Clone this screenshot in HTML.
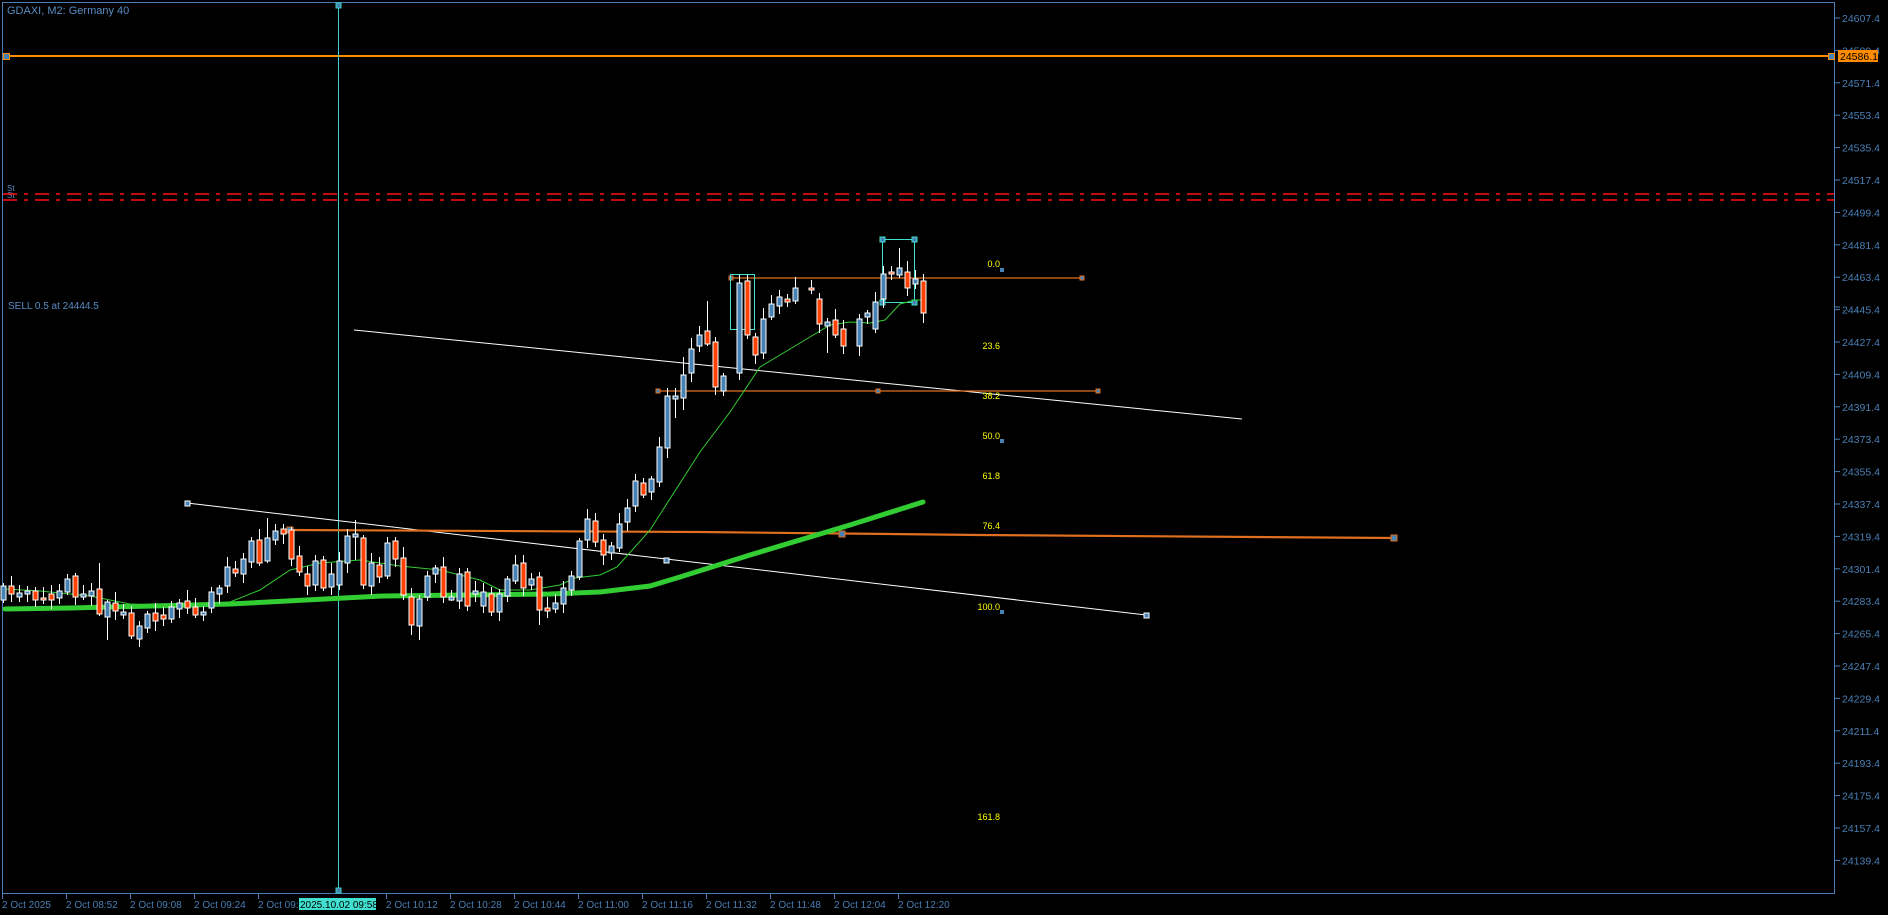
<!DOCTYPE html>
<html><head><meta charset="utf-8"><style>
html,body{margin:0;padding:0;background:#000;width:1888px;height:915px;overflow:hidden}
svg{display:block}
text{font-family:"Liberation Sans",sans-serif}
</style></head><body>
<svg id="s" width="1888" height="915" viewBox="0 0 1888 915" xmlns="http://www.w3.org/2000/svg">
<rect width="1888" height="915" fill="#000"/>
<rect x="2.5" y="2.5" width="1832" height="891" fill="none" stroke="#4a7fb5" stroke-width="1"/>
<text x="7" y="14" font-size="11" fill="#5a8cc4">GDAXI, M2:  Germany 40</text>
<text x="8" y="309" font-size="10" fill="#5a8cc4">SELL 0.5 at 24444.5</text>
<text x="7" y="191" font-size="8" fill="#5a8cc4">St</text>
<text x="7" y="198" font-size="8" fill="#5a8cc4">St</text>
<line x1="3" y1="194" x2="1834" y2="194" stroke="#ff1010" stroke-width="1.4" stroke-dasharray="14,7,4,7"/>
<line x1="3" y1="200" x2="1834" y2="200" stroke="#ff1010" stroke-width="1.4" stroke-dasharray="14,7,4,7"/>
<line x1="3" y1="56" x2="1834" y2="56" stroke="#ff8c00" stroke-width="2"/>
<rect x="3.5" y="53.5" width="6" height="6" fill="#4682b4" stroke="#ff8c00"/>
<rect x="1828.5" y="53.5" width="6" height="6" fill="#4682b4" stroke="#ff8c00"/>
<line x1="338.5" y1="5" x2="338.5" y2="893" stroke="#40d0c8" stroke-width="1"/>
<rect x="336" y="3" width="5" height="5" fill="#4682b4" stroke="#40d0c8"/>
<rect x="336" y="888" width="5" height="5" fill="#4682b4" stroke="#40d0c8"/>
<line x1="354" y1="330" x2="1242" y2="419" stroke="#fff" stroke-width="1"/>
<line x1="187" y1="503" x2="1146" y2="615" stroke="#fff" stroke-width="1"/>
<rect x="185" y="501" width="5" height="5" fill="#4682b4" stroke="#fff"/>
<rect x="664" y="558" width="5" height="5" fill="#4682b4" stroke="#fff"/>
<rect x="1144" y="613" width="5" height="5" fill="#4682b4" stroke="#fff"/>
<line x1="731" y1="278" x2="1082" y2="278" stroke="#e0701f" stroke-width="1.3"/>
<rect x="729" y="276" width="4" height="4" fill="#4682b4" stroke="#e0701f"/>
<rect x="1080" y="276" width="4" height="4" fill="#4682b4" stroke="#e0701f"/>
<line x1="658" y1="391" x2="1098" y2="391" stroke="#e0701f" stroke-width="1.3"/>
<rect x="656" y="389" width="4" height="4" fill="#4682b4" stroke="#e0701f"/>
<rect x="876" y="389" width="4" height="4" fill="#4682b4" stroke="#e0701f"/>
<rect x="1096" y="389" width="4" height="4" fill="#4682b4" stroke="#e0701f"/>
<polyline points="289,530 700,532 980,535 1394,538" fill="none" stroke="#e0701f" stroke-width="2.2"/>
<rect x="287" y="527" width="6" height="6" fill="#4682b4" stroke="#e0701f"/>
<rect x="839" y="531" width="6" height="6" fill="#4682b4" stroke="#e0701f"/>
<rect x="1391" y="535" width="6" height="6" fill="#4682b4" stroke="#e0701f"/>
<g font-size="9" fill="#ffff00" text-anchor="end">
<text x="1000" y="267">0.0</text><text x="1000" y="349">23.6</text><text x="1000" y="399">38.2</text>
<text x="1000" y="439">50.0</text><text x="1000" y="479">61.8</text><text x="1000" y="529">76.4</text>
<text x="1000" y="610">100.0</text><text x="1000" y="820">161.8</text>
</g>
<rect x="1000" y="268" width="4" height="4" fill="#4682b4"/>
<rect x="1000" y="439" width="4" height="4" fill="#4682b4"/>
<rect x="1000" y="610" width="4" height="4" fill="#4682b4"/>
<rect x="730.5" y="274.5" width="24" height="55" fill="none" stroke="#40e0d0"/>
<rect x="882.5" y="239.5" width="32" height="63" fill="none" stroke="#40e0d0"/>
<g fill="#4682b4" stroke="#40e0d0">
<rect x="880" y="237" width="5" height="5"/><rect x="912" y="237" width="5" height="5"/>
<rect x="880" y="300" width="5" height="5"/><rect x="912" y="300" width="5" height="5"/>
</g>
<polyline points="5,609 70,608 230,604 383,596 550,594 600,592 650,586 680,577 750,555 850,525 923,502" fill="none" stroke="#32cd32" stroke-width="5" stroke-linecap="round"/>
<polyline points="5,589 40,591 90,596 130,604 180,606 230,602 260,590 290,570 320,563 360,560 400,566 440,570 480,580 500,590 530,590 560,585 575,578 600,575 617,567 650,530 700,452 730,412 760,367 780,355 800,343 830,325 850,322 870,323 885,320 900,304 915,300 925,300" fill="none" stroke="#32cd32" stroke-width="1"/>
<g id="c"></g>
<g id="ax"></g>
</svg>
<script>
var D=[[586,600,0],[586,594,1],[593,597,0],[592,592,2],[591,600,1],[598,600,1],[594,600,1],[591,598,0],[579,592,0],[576,597,1],[595,595,2],[591,596,0],[589,614,1],[602,617,0],[603,611,1],[613,613,2],[613,636,1],[626,639,0],[614,628,0],[613,621,1],[615,619,1],[607,619,0],[603,609,0],[601,608,1],[607,615,1],[613,613,2],[592,608,0],[588,594,0],[567,586,0],[569,573,1],[559,574,0],[541,562,0],[540,563,1],[538,561,0],[531,540,0],[529,534,1],[530,559,1],[556,572,1],[574,586,1],[561,585,0],[560,588,1],[574,587,0],[561,585,0],[536,563,0],[535,535,2],[538,585,1],[563,586,0],[565,577,1],[543,576,0],[541,559,1],[558,595,1],[597,625,1],[599,626,0],[576,597,0],[568,574,0],[567,597,1],[598,598,2],[574,601,0],[572,606,1],[592,592,2],[592,606,0],[594,612,1],[594,612,0],[579,596,0],[565,581,0],[563,588,1],[579,585,0],[577,610,1],[608,611,1],[603,609,0],[588,604,0],[576,590,0],[541,577,0],[519,540,0],[521,542,1],[540,555,1],[546,553,0],[524,548,0],[508,522,0],[481,506,0],[483,495,1],[479,492,0],[447,482,0],[396,448,0],[397,397,2],[375,398,0],[349,373,0],[335,346,0],[331,344,1],[342,387,1],[376,391,0],null,[283,373,0],[281,335,1],[337,355,1],[319,353,0],[304,317,0],[297,306,0],[299,302,1],[288,301,0],null,[288,290,1],[299,324,1],[322,326,0],[320,335,1],[329,346,1],null,[319,346,0],[313,317,0],[302,329,0],[274,299,0],[272,274,1],[268,275,0],[272,288,1],[279,284,0],[281,313,1]];
var W={12:[563,616],13:[600,640],33:[518,563],88:[301,346],99:[277,304],112:[248,278],103:[318,353],44:[520,560],67:[572,625],84:[388,418],85:[357,410],52:[595,640]};
var h='';
for(var i=0;i<D.length;i++){var d=D[i];if(!d)continue;var x=3+8*i;var t=d[0],b=d[1];
var hi=t-3-((i*7)%9),lo=b+3+((i*5)%8);if(W[i]){hi=W[i][0];lo=W[i][1];}
h+='<line x1="'+x+'.5" y1="'+hi+'" x2="'+x+'.5" y2="'+lo+'" stroke="#fff" stroke-width="1"/>';
if(d[2]==2){h+='<rect x="'+(x-2)+'" y="'+(t-1)+'" width="5" height="3" fill="#4682b4" stroke="#fff" stroke-width="1"/>';}
else{var hh=Math.max(b-t,2);h+='<rect x="'+(x-2)+'" y="'+t+'" width="5" height="'+hh+'" fill="'+(d[2]?'#ff4000':'#4682b4')+'" stroke="#fff" stroke-width="1"/>';}}
document.getElementById('c').innerHTML=h;
var a='',c='#4a7fb5';
for(var k=0;k<27;k++){var y=18+k*32.4,p=(24607.4-18*k).toFixed(1);
a+='<line x1="1835" y1="'+y+'" x2="1840" y2="'+y+'" stroke="'+c+'"/><text x="1842" y="'+(y+4)+'" font-size="10.5" fill="'+c+'">'+p+'</text>';}
a+='<line x1="1835" y1="307" x2="1840" y2="307" stroke="'+c+'"/><text x="1842" y="311" font-size="8" fill="'+c+'">. . . .</text>';
a+='<rect x="1838" y="50" width="40" height="12" fill="#ff8c00"/><text x="1840" y="60" font-size="10.5" fill="#000">24586.1</text>';
var T=['2 Oct 2025','2 Oct 08:52','2 Oct 09:08','2 Oct 09:24','2 Oct 09:40','2 Oct 09:56','2 Oct 10:12','2 Oct 10:28','2 Oct 10:44','2 Oct 11:00','2 Oct 11:16','2 Oct 11:32','2 Oct 11:48','2 Oct 12:04','2 Oct 12:20'];
for(var j=0;j<T.length;j++){var x=2+64*j;if(j==5)continue;
a+='<line x1="'+(x+.5)+'" y1="894" x2="'+(x+.5)+'" y2="899" stroke="'+c+'"/><text x="'+x+'" y="908" font-size="10" fill="'+c+'">'+T[j]+'</text>';}
a+='<rect x="299" y="898" width="77" height="12" fill="#40e0d0"/><text x="300" y="908" font-size="10" fill="#000">2025.10.02 09:58</text>';
document.getElementById('ax').innerHTML=a;
</script>
</body></html>
